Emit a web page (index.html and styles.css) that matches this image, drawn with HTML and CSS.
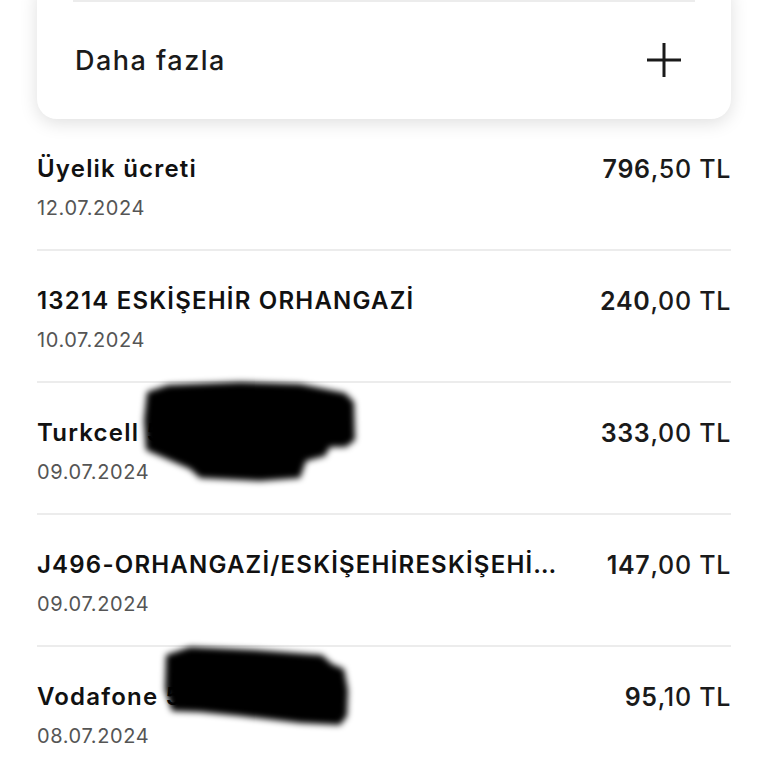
FILE: index.html
```html
<!DOCTYPE html>
<html lang="tr">
<head>
<meta charset="utf-8">
<title>Hareketler</title>
<link rel="stylesheet" href="styles.css">
</head>
<body>
<div class="page">
  <section class="card">
    <div class="card-row">
      <span class="card-label">Daha fazla</span>
      <svg class="plus" viewBox="0 0 34 34" width="34" height="34" aria-hidden="true">
        <path d="M0 17H34M17 0V34" stroke="#1a1a1a" stroke-width="3" fill="none"/>
      </svg>
    </div>
  </section>

  <ul class="tx-list">
    <li class="tx">
      <div class="tx-info">
        <div class="tx-title">Üyelik ücreti</div>
        <div class="tx-date">12.07.2024</div>
      </div>
      <div class="tx-amount"><b>796</b>,50 TL</div>
    </li>
    <li class="tx">
      <div class="tx-info">
        <div class="tx-title">13214 ESKİŞEHİR ORHANGAZİ</div>
        <div class="tx-date">10.07.2024</div>
      </div>
      <div class="tx-amount"><b>240</b>,00 TL</div>
    </li>
    <li class="tx">
      <div class="tx-info">
        <div class="tx-title">Turkcell 5</div>
        <div class="tx-date">09.07.2024</div>
      </div>
      <div class="tx-amount"><b>333</b>,00 TL</div>
    </li>
    <li class="tx">
      <div class="tx-info">
        <div class="tx-title">J496-ORHANGAZİ/ESKİŞEHİRESKİŞEHİR TR</div>
        <div class="tx-date">09.07.2024</div>
      </div>
      <div class="tx-amount"><b>147</b>,00 TL</div>
    </li>
    <li class="tx">
      <div class="tx-info">
        <div class="tx-title">Vodafone 5</div>
        <div class="tx-date">08.07.2024</div>
      </div>
      <div class="tx-amount"><b>95</b>,10 TL</div>
    </li>
  </ul>

  <svg class="redact" viewBox="0 0 768 768" width="768" height="768" aria-hidden="true">
    <defs>
      <filter id="soft" x="-10%" y="-10%" width="120%" height="120%">
        <feGaussianBlur stdDeviation="3"/>
      </filter>
    </defs>
    <path filter="url(#soft)" fill="#000" d="M147 392 L168 385 L240 382 L300 384 L345 393 L354 402 L355 440 L346 447 L330 447 L325 456 L306 461 L300 478 L260 481 L200 478 L190 469 L160 456 L146 450 L144 420 Z"/>
    <path filter="url(#soft)" fill="#000" d="M166 655 L190 647 L255 650 L322 655 L332 664 L344 669 L348 690 L347 716 L340 725 L300 723 L240 716 L200 712 L172 711 L165 690 Z"/>
  </svg>
</div>
</body>
</html>
```

FILE: styles.css
```css
* { box-sizing: border-box; }

html, body {
  margin: 0;
  padding: 0;
  background: #ffffff;
}

body {
  font-family: "Inter", "Noto Sans", sans-serif;
  color: #141414;
  overflow: hidden;
}

.page {
  position: relative;
  width: 768px;
  height: 768px;
  overflow: hidden;
}

.card {
  margin: -20px 37px 0;
  padding: 20px 36px 0;
  background: #fff;
  border-radius: 20px;
  box-shadow: 0 4px 18px rgba(0, 0, 0, 0.13);
}

.card-row {
  height: 119px;
  border-top: 2px solid #ececec;
  display: flex;
  align-items: center;
  justify-content: space-between;
  padding: 0 14px 0 2px;
}

.card-label {
  font-size: 27px;
  font-weight: 500;
  letter-spacing: 1.5px;
  color: #1a1a1a;
}

.plus { display: block; margin-top: -2px; }

.tx-list {
  list-style: none;
  margin: 0;
  padding: 0 37px;
}

.tx {
  height: 132px;
  display: flex;
  justify-content: space-between;
  align-items: flex-start;
  gap: 44px;
  padding-top: 35px;
  border-bottom: 2px solid #ececec;
}

.tx:last-child { border-bottom: none; }

.tx-info {
  min-width: 0;
  flex: 1;
}

.tx-title {
  font-size: 24px;
  line-height: 30px;
  font-weight: 600;
  letter-spacing: 1.2px;
  color: #111;
  white-space: nowrap;
  overflow: hidden;
  text-overflow: ellipsis;
}

.tx-date {
  margin-top: 12px;
  font-size: 20px;
  line-height: 24px;
  letter-spacing: 0.6px;
  color: #555;
  font-weight: 400;
}

.tx-amount {
  font-size: 25px;
  line-height: 30px;
  font-weight: 500;
  letter-spacing: 0.7px;
  color: #1a1a1a;
  white-space: nowrap;
}

.tx-amount b { font-weight: 600; }

.redact {
  position: absolute;
  top: 0;
  left: 0;
  pointer-events: none;
}
```
